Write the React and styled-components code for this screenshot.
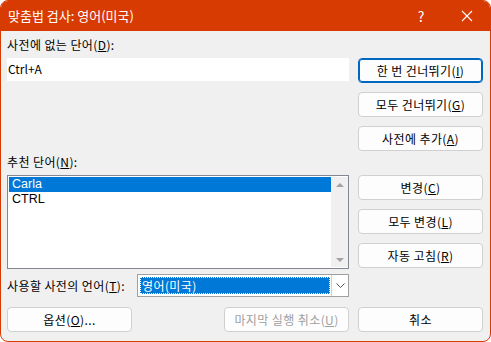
import React from 'react'
import styled, { createGlobalStyle } from 'styled-components'

const GlobalStyle = createGlobalStyle`
  html, body {
    margin: 0;
    padding: 0;
    background: #fff;
  }
  body {
    font-family: "Noto Sans CJK KR", "Noto Sans", sans-serif;
    font-size: 12px;
    color: #000;
  }
`

const Window = styled.div`
  width: 491px;
  height: 342px;
  box-sizing: border-box;
  border: 1px solid #d83b01;
  border-radius: 8px;
  overflow: hidden;
  background: #f0f0f0;
  display: flex;
  flex-direction: column;
`

const TitleBar = styled.header`
  height: 30px;
  flex-shrink: 0;
  background: #d83b01;
  color: #fff;
  display: flex;
  align-items: center;
  padding-left: 7px;
`

const Title = styled.h1`
  flex: 1;
  margin: 0;
  font-size: 13px;
  font-weight: normal;
  line-height: 30px;
`

const TitleButton = styled.div`
  width: 46px;
  height: 30px;
  display: flex;
  align-items: center;
  justify-content: center;
  font-size: 14px;
  color: #fff;
`

const Body = styled.main`
  flex: 1;
  padding: 6px 7px 0 6px;
  display: flex;
  flex-direction: column;
  letter-spacing: 0.4px;
`

const Top = styled.div`
  display: flex;
  gap: 9px;
  align-items: flex-start;
`

const LeftColumn = styled.section`
  width: 342px;
  display: flex;
  flex-direction: column;
`

const RightColumn = styled.section`
  width: 125px;
  padding-top: 21px;
  display: flex;
  flex-direction: column;
  gap: 9px;
`

const Label = styled.label`
  display: block;
  height: 21px;
  line-height: 16px;
  white-space: nowrap;
  margin-top: ${p => p.$top || 0}px;
`

const TextBox = styled.div`
  height: 23px;
  background: #fff;
  line-height: 22px;
  padding-left: 1px;
  letter-spacing: 0;
`

const ListBox = styled.div`
  height: 94px;
  box-sizing: border-box;
  border: 1px solid #828790;
  background: #fff;
  display: flex;
  padding: 1px 0 1px 1px;
`

const Items = styled.ul`
  flex: 1;
  margin: 0;
  padding: 0;
  list-style: none;
`

const Item = styled.li`
  height: 15px;
  line-height: 15px;
  padding-left: 3px;
  font-family: "Liberation Sans", sans-serif;
  font-size: 12.5px;
  letter-spacing: 0;
  background: ${p => (p.$selected ? '#0078d7' : 'transparent')};
  color: ${p => (p.$selected ? '#fff' : '#000')};
`

const ScrollBar = styled.div`
  width: 17px;
  background: #f0f0f0;
  display: flex;
  flex-direction: column;
  justify-content: space-between;
  align-items: center;
  padding: 6px 0 5px;
`

const Arrow = styled.span`
  width: 0;
  height: 0;
  border-left: 4px solid transparent;
  border-right: 4px solid transparent;
  ${p => (p.$down ? 'border-top: 4px solid #a3a3a3;' : 'border-bottom: 4px solid #a3a3a3;')}
`

const LangRow = styled.div`
  margin-top: 5px;
  display: flex;
  align-items: center;
  justify-content: space-between;
`

const Combo = styled.div`
  width: 212px;
  height: 23px;
  box-sizing: border-box;
  border: 1px solid #a0a0a0;
  background: #fff;
  display: flex;
  padding: 2px 0 2px 2px;
`

const ComboValue = styled.div`
  flex: 1;
  background: #0078d7;
  color: #fff;
  line-height: 17px;
  padding-left: 2px;
  outline: 1px dotted #fff;
  outline-offset: -1px;
`

const ComboButton = styled.div`
  width: 16px;
  margin: -2px 0 -2px 1px;
  border-left: 1px solid #d0d0d0;
  display: flex;
  align-items: center;
  justify-content: center;
`

const Button = styled.button`
  height: 25px;
  width: 125px;
  box-sizing: border-box;
  padding: 0;
  font-family: inherit;
  font-size: 12px;
  letter-spacing: 0.4px;
  border-radius: 4px;
  background: #fdfdfd;
  color: ${p => (p.disabled ? '#a0a0a0' : '#000')};
  border: 1px solid ${p => (p.$primary ? '#0067c0' : '#d0d0d0')};
  box-shadow: ${p => (p.$primary ? 'inset 0 0 0 1px #0067c0' : 'none')};
  margin-top: ${p => p.$top || 0}px;
  u {
    text-decoration-color: ${p => (p.disabled ? '#a0a0a0' : '#000')};
  }
`

const Footer = styled.footer`
  margin-top: 10px;
  display: flex;
  gap: 9px;
`

const FooterLeft = styled.div`
  width: 342px;
  display: flex;
  justify-content: space-between;
`

export default function App () {
  return (
    <>
      <GlobalStyle />
      <Window>
        <TitleBar>
          <Title>맞춤법 검사: 영어(미국)</Title>
          <TitleButton>?</TitleButton>
          <TitleButton>
            <svg width='12' height='12' viewBox='0 0 12 12'>
              <path d='M1 1L11 11M11 1L1 11' stroke='#fff' strokeWidth='1.1' />
            </svg>
          </TitleButton>
        </TitleBar>
        <Body>
          <Top>
            <LeftColumn>
              <Label>사전에 없는 단어(<u>D</u>):</Label>
              <TextBox>Ctrl+A</TextBox>
              <Label $top={73}>추천 단어(<u>N</u>):</Label>
              <ListBox>
                <Items>
                  <Item $selected>Carla</Item>
                  <Item>CTRL</Item>
                </Items>
                <ScrollBar>
                  <Arrow />
                  <Arrow $down />
                </ScrollBar>
              </ListBox>
              <LangRow>
                <span>사용할 사전의 언어(<u>T</u>):</span>
                <Combo>
                  <ComboValue>영어(미국)</ComboValue>
                  <ComboButton>
                    <svg width='9' height='5' viewBox='0 0 9 5'>
                      <path d='M0.5 0.5L4.5 4.5L8.5 0.5' stroke='#555' fill='none' />
                    </svg>
                  </ComboButton>
                </Combo>
              </LangRow>
            </LeftColumn>
            <RightColumn>
              <Button $primary>한 번 건너뛰기(<u>I</u>)</Button>
              <Button>모두 건너뛰기(<u>G</u>)</Button>
              <Button>사전에 추가(<u>A</u>)</Button>
              <Button $top={15}>변경(<u>C</u>)</Button>
              <Button>모두 변경(<u>L</u>)</Button>
              <Button>자동 고침(<u>R</u>)</Button>
            </RightColumn>
          </Top>
          <Footer>
            <FooterLeft>
              <Button>옵션(<u>O</u>)...</Button>
              <Button disabled>마지막 실행 취소(<u>U</u>)</Button>
            </FooterLeft>
            <Button>취소</Button>
          </Footer>
        </Body>
      </Window>
    </>
  )
}
